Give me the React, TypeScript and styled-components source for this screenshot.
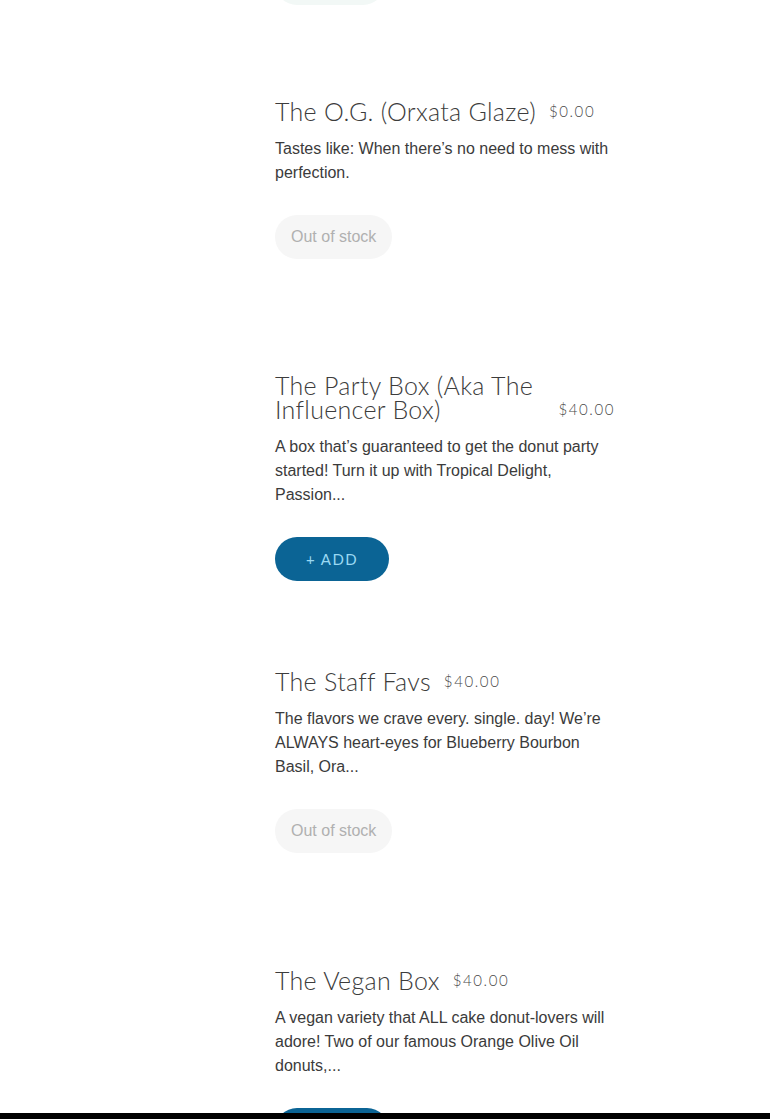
import styled, { createGlobalStyle } from 'styled-components';

const GlobalStyle = createGlobalStyle`
	html, body {
		margin: 0;
		padding: 0;
		background: #fff;
	}
	body {
		font-family: "Liberation Sans", Arial, sans-serif;
		overflow: hidden;
	}
`;

const products = [
	{
		name: "The O.G. (Orxata Glaze)",
		price: "$0.00",
		description: "Tastes like: When there’s no need to mess with perfection.",
		inStock: false,
		space: 94
	},
	{
		name: "The Party Box (Aka The Influencer Box)",
		price: "$40.00",
		description: "A box that’s guaranteed to get the donut party started! Turn it up with Tropical Delight, Passion...",
		inStock: true,
		space: 114
	},
	{
		name: "The Staff Favs",
		price: "$40.00",
		description: "The flavors we crave every. single. day! We’re ALWAYS heart-eyes for Blueberry Bourbon Basil, Ora...",
		inStock: false,
		space: 88
	},
	{
		name: "The Vegan Box",
		price: "$40.00",
		description: "A vegan variety that ALL cake donut-lovers will adore! Two of our famous Orange Olive Oil donuts,...",
		inStock: true,
		space: 115
	}
];

const Page = styled.div`
	display: flex;
	flex-direction: column;
	width: 100%;
`;

const Item = styled.div<{ $space: number }>`
	display: grid;
	grid-template-columns: 275px 340px;
	margin-top: ${({ $space }) => $space}px;
`;

const ImageSlot = styled.div``;

const Content = styled.div`
	display: flex;
	flex-direction: column;
	align-items: flex-start;
`;

const Header = styled.div`
	display: flex;
	align-items: flex-end;
	gap: 13px;
	width: 100%;
`;

const Title = styled.h3`
	margin: 0;
	font-family: Lato, "Open Sans", sans-serif;
	font-weight: 300;
	font-size: 25px;
	line-height: 24px;
	color: #3c3c3c;
	letter-spacing: 0.3px;
`;

const Price = styled.span`
	flex-shrink: 0;
	font-family: Lato, "Open Sans", sans-serif;
	font-weight: 300;
	font-size: 15px;
	line-height: 24px;
	letter-spacing: 1.6px;
	color: #4a4a4a;
`;

const Description = styled.p`
	margin: 14px 0 0;
	font-size: 16px;
	line-height: 24px;
	color: #3b3b3b;
`;

const PillButton = styled.button<{ $soldOut?: boolean; $faint?: boolean }>`
	margin-top: 30px;
	height: 44px;
	border: none;
	border-radius: 22px;
	padding: 0 ${({ $soldOut }) => ($soldOut ? 16 : 31)}px;
	background: ${({ $soldOut, $faint }) => ($faint ? '#f2f8f6' : $soldOut ? '#f6f6f6' : '#0b6495')};
	color: ${({ $soldOut }) => ($soldOut ? '#b0b0b0' : '#9ad9f3')};
	font-family: ${({ $soldOut }) => ($soldOut ? '"Liberation Sans", Arial, sans-serif' : 'Lato, "Open Sans", sans-serif')};
	font-size: ${({ $soldOut }) => ($soldOut ? 16 : 15)}px;
	letter-spacing: ${({ $soldOut }) => ($soldOut ? 0 : 1.4)}px;
	cursor: ${({ $soldOut }) => ($soldOut ? 'default' : 'pointer')};
`;

const PartialRow = styled.div`
	display: grid;
	grid-template-columns: 275px 340px;
	margin-top: -39px;
`;

const CartBar = styled.div`
	position: fixed;
	left: 0;
	right: 0;
	bottom: 0;
	height: 6px;
	background: #000;
`;

const Product = ({ product }: { product: typeof products[number] }) => (
	<Item $space={product.space}>
		<ImageSlot />
		<Content>
			<Header>
				<Title>{product.name}</Title>
				<Price>{product.price}</Price>
			</Header>
			<Description>{product.description}</Description>
			{product.inStock ? (
				<PillButton>+ ADD</PillButton>
			) : (
				<PillButton $soldOut disabled>Out of stock</PillButton>
			)}
		</Content>
	</Item>
);

const App = () => {
	return (
		<>
			<GlobalStyle />
			<Page>
				<PartialRow>
					<ImageSlot />
					<Content>
						<PillButton $faint style={{ marginTop: 0, width: 110 }} />
					</Content>
				</PartialRow>
				{products.map(p => (
					<Product key={p.name} product={p} />
				))}
			</Page>
			<CartBar />
		</>
	);
};

export default App;
